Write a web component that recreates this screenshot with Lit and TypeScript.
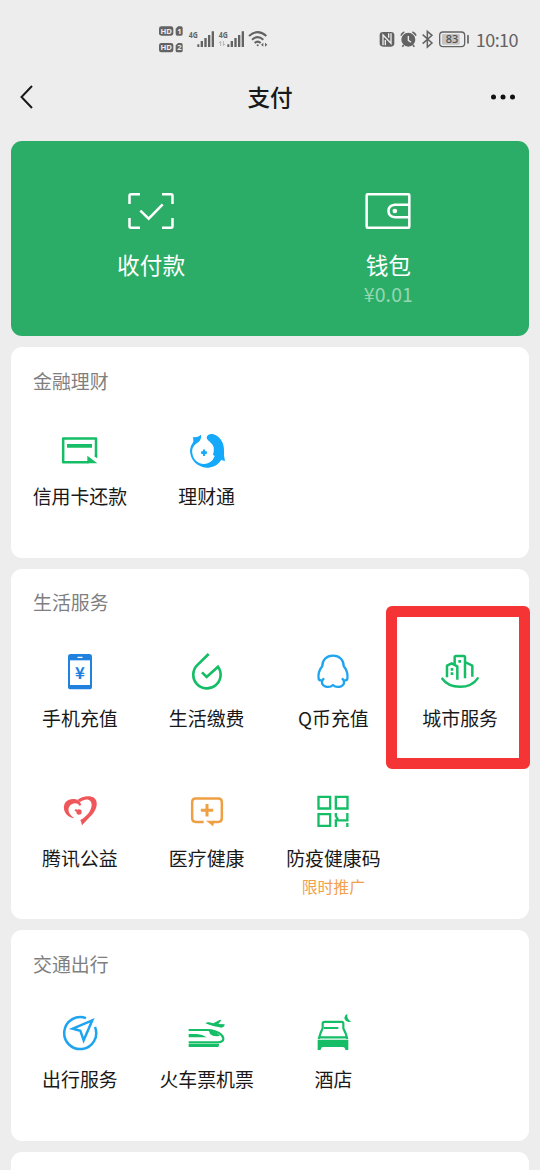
import { LitElement, html, css, svg, nothing } from "lit";
import { customElement, property } from "lit/decorators.js";

const G = "#14bd66";
const B = "#1fa5f0";

type Icon = { box: string; art: unknown };

const icons: Record<string, Icon> = {
  credit: {
    box: "144 265 132 132",
    art: svg`<path d="M258 352V296.500H159.500V367.500H236" fill="none" stroke=${G} stroke-width="7.500" stroke-linejoin="round"/>
      <path d="M171 313h75v11h-75zM232 348L262 371H232zM254.500 345h7v11l-7-5z" fill=${G}/>`,
  },
  wealth: {
    box: "525 265 132 132",
    art: svg`<path d="M548 292Q562 295 573 285Q575 299 565 308C551 316 545 326 547 341C549 360 564 373 582 373C598 373 610 362 614 349L609 345Q613 335 611 323C608 308 592 305 590 294C591 282 608 280 620 288C636 298 643 316 642 335Q641 350 645 364Q638 363 634 360C623 378 606 384 590 384C562 383 540 361 540 332Q541 318 550 306Q551 298 548 292Z" fill="#14a9fa"/>
      <path d="M579 330q3-2 6 0v5h5q2 4 0 8h-5v5q-3 2-6 0v-5h-5q-2-4 0-8h5z" fill="#14a9fa"/>`,
  },
  phone: {
    box: "144 240 132 132",
    art: svg`<rect x="174" y="252" width="72" height="106" rx="8" fill="#2181df"/>
      <path d="M180 271h60v74h-60z" fill="#fff"/><path d="M204 262h12" stroke="#fff" stroke-width="4" stroke-linecap="round"/>
      <text x="210" y="327" text-anchor="middle" font-family="Noto Sans CJK SC" font-size="50" font-weight="700" fill="#2181df">¥</text>`,
  },
  bill: {
    box: "525 240 132 132",
    art: svg`<path d="M596 252L561 286A41 41 0 1 0 624 290L590 321L576 307" fill="none" stroke=${G} stroke-width="8"/>`,
  },
  penguin: {
    box: "125 165 132 132",
    art: svg`<path d="M191 182C170 182 159 196 159 213C149 226 146 240 148 251C149 256 153 257 159 256C156 266 160 272 167 274C176 277 186 275 191 270C196 275 206 277 215 274C222 272 226 266 223 256C229 257 233 256 234 251C236 240 233 226 223 213C223 196 212 182 191 182ZM158 257L164 250M224 257L218 250" fill="none" stroke=${B} stroke-width="7" stroke-linejoin="round"/>`,
  },
  city: {
    box: "505 165 132 132",
    art: svg`<g fill="none" stroke=${G} stroke-width="7.500" stroke-linejoin="round"><path d="M532 247V212L546 205L563 214V254M555 207V187Q555 183 559 183H582Q586 183 586 187V250M586 201L608 212V245"/><path d="M518 251Q535 275 571 275.500Q607 275 624 250" stroke-linecap="round"/></g>
      <path d="M566 195h8v8h-8zM543 219h8v8h-8zM543 232h8v8h-8z" fill=${G}/>`,
  },
  heart: {
    box: "144 32 132 132",
    art: svg`<g fill="#f0575a"><path d="M202 62C214 51 237 47 250 54C266 64 262 87 248 104L216 138Q214 128 211 122C230 113 244 94 245 78C246 60 229 54 210 68Z"/><path d="M214 77C208 55 180 54 167 68C153 88 168 114 193 117C177 105 171 91 179 80C187 70 202 68 208 79Z"/><circle cx="207" cy="98" r="8"/><circle cx="198" cy="93" r="3.500"/></g>`,
  },
  medical: {
    box: "525 32 132 132",
    art: svg`<path d="M581 128H557Q546.500 128 546.500 117V68Q546.500 57.500 557 57.500H625Q635.500 57.500 635.500 68V117Q635.500 128 625 128H611" fill="none" stroke="#efa045" stroke-width="7.500"/>
      <path d="M588 124H614V126L609 141ZM586.500 74h9v14.500h14v9h-14v14h-9v-14h-14v-9h14z" fill="#efa045"/>`,
  },
  qr: {
    box: "155 30 132 132",
    art: svg`<path d="M177.500 50.500h35v35h-35zM229.500 50.500h35v35h-35zM177.500 102.500h35v35h-35zM229.500 99v9l6 10M229.500 141v-20h34.500V99M264 129v12" fill="none" stroke=${G} stroke-width="7"/>`,
  },
  compass: {
    box: "145 243 132 132",
    art: svg`<path d="M229 264.500A48 48 0 1 0 256 291M248 271L222 331L212 302L189 296Z" fill="none" stroke=${B} stroke-width="7.500"/>`,
  },
  train: {
    box: "525 243 132 132",
    art: svg`<path d="M536 300H594C622 301 640 315 640 326Q640 336 624 337H536" fill="none" stroke=${G} stroke-width="6.500"/>
      <path d="M536 342H628L625 351H536ZM536 312H560Q578 313 590 322H536ZM596 300Q618 304 630 317Q612 322 600 312ZM586 280L594 276L610 280L630 269L634 271L625 282L644 283Q644 291 635 293Q615 291 586 280Z" fill=${G}/>`,
  },
  hotel: {
    box: "125 33 132 132",
    art: svg`<path d="M148 117Q154 96 160 85V70Q160 65.500 166 65.500H217Q222 65.500 222 70V85Q229 97 234 117M164 84H207M152 112H230" fill="none" stroke=${G} stroke-width="6.500"/>
      <path d="M145 119H237V150H228Q227 141 221 141H161Q155 141 154 150H145ZM234 41Q223 46 226 58Q232 70 247 64Q232 61 234 41Z" fill=${G}/>`,
  },
};

type Service = { icon: string; name: string; note?: string; marked?: boolean };

const sections: { title: string; items: Service[] }[] = [
  {
    title: "金融理财",
    items: [
      { icon: "credit", name: "信用卡还款" },
      { icon: "wealth", name: "理财通" },
    ],
  },
  {
    title: "生活服务",
    items: [
      { icon: "phone", name: "手机充值" },
      { icon: "bill", name: "生活缴费" },
      { icon: "penguin", name: "Q币充值" },
      { icon: "city", name: "城市服务", marked: true },
      { icon: "heart", name: "腾讯公益" },
      { icon: "medical", name: "医疗健康" },
      { icon: "qr", name: "防疫健康码", note: "限时推广" },
    ],
  },
  {
    title: "交通出行",
    items: [
      { icon: "compass", name: "出行服务" },
      { icon: "train", name: "火车票机票" },
      { icon: "hotel", name: "酒店" },
    ],
  },
];

@customElement("status-bar")
class StatusBar extends LitElement {
  static styles = css`
    :host { display: flex; justify-content: space-between; height: 60px; padding: 15px 22px 0 159.3px; box-sizing: border-box; color: #636363; }
    .group { display: flex; height: 45px; }
    .right { height: 40px; padding-top: 5px; }
    svg { display: block; font-family: "Noto Sans", sans-serif; font-weight: 700; }
    .clock { font: 18px/39px "Noto Sans CJK SC", sans-serif; letter-spacing: -0.55px; }
  `;
  signal(x: number, data: boolean) {
    return html`<svg width="30" height="45" viewBox="${x} 0 90 135" fill="#636363">
      <text x=${x + 2} y="70" font-size="28" textLength="27" lengthAdjust="spacingAndGlyphs">4G</text>
      <path transform="translate(${x} 0)" d="M28 88h6v8h-6zM38 78h7v18h-7zM49 69h7v27h-7zM60 60h7v36h-7zM71 49h7v47h-7z" />
      ${data ? svg`<path d="M213 93V79l-5 5M221 78v14l5-5" fill="none" stroke="#b5b5b5" stroke-width="3"/>` : nothing}
    </svg>`;
  }
  badge(y: number, n: string) {
    return svg`<rect x="28" y=${y} width="43" height="28" rx="7"/><path transform="translate(78 ${y})" d="M7 0H16Q21 0 21 5V23Q21 28 16 28H5Q0 28 0 23V7Z"/>
      <g fill="#ededed" font-size="23" text-anchor="middle"><text x="49.500" y=${y + 22}>HD</text><text x="89" y=${y + 22}>${n}</text></g>`;
  }
  render() {
    return html`
      <div class="group">
        <svg width="29" height="45" viewBox="28 0 87 135" fill="#636363">${this.badge(34, "1")}${this.badge(84, "2")}</svg>
        ${this.signal(115, false)}${this.signal(205, true)}
        <svg width="20" height="45" viewBox="295 0 60 135" fill="none" stroke="#636363" stroke-width="6">
          <path d="M298 63Q324 40 350 63M307 74Q324 59 341 74M315 84Q324 76 333 84" />
          <circle cx="324" cy="91" r="3" fill="#636363" stroke="none"/>
          <path d="M341 83v12l-7-6zM346 83v12l7-6z" fill="#636363" stroke="none"/>
        </svg>
      </div>
      <div class="group right">
        <svg width="98" height="40" viewBox="26 0 294 120" fill="none" stroke="#636363">
          <rect x="31" y="36" width="44" height="44" rx="10" fill="#636363" stroke="none"/>
          <path d="M41 76V45L65 70V40M48 76V60M58 40V53" stroke="#ededed" stroke-width="4"/>
          <circle cx="117" cy="59" r="19" fill="#636363" stroke-width="4"/>
          <path d="M117 48V61L125 67" stroke="#ededed" stroke-width="4"/>
          <path d="M95 47Q97 39 105 36M129 36Q137 39 140 47M103 75L99 80M131 75L135 80" stroke-width="5"/>
          <path d="M160 44L188 69L174 81V34L188 46L160 71" stroke-width="4.500"/>
          <rect x="211" y="36" width="75" height="44" rx="10" stroke-width="4"/>
          <rect x="218" y="42" width="53" height="32" rx="4" fill="#c4c4c4" stroke="none"/>
          <path d="M296 47V69" stroke-width="5" stroke-linecap="round"/>
          <text x="248" y="70" text-anchor="middle" font-size="33" font-weight="500" fill="#505050" stroke="none">83</text>
        </svg>
        <span class="clock">10:10</span>
      </div>`;
  }
}

@customElement("service-card")
class ServiceCard extends LitElement {
  @property({ attribute: false }) heading = "";
  @property({ attribute: false }) items: Service[] = [];
  static styles = css`
    :host { display: block; background: #fff; border-radius: 11px; }
    .title { height: 28px; padding: 19.5px 22px 22.5px; font-size: 18.9px; line-height: 28px; color: #7f7f7f; }
    .grid { display: grid; grid-template-columns: repeat(4, 1fr); grid-auto-rows: 140px; padding: 0 5.5px 0.5px; }
    .item { position: relative; display: flex; flex-direction: column; align-items: center; padding-top: 11px; }
    svg { display: block; width: 44px; height: 44px; }
    .name { margin-top: 10px; font-size: 18.9px; line-height: 27px; color: #191919; white-space: nowrap; }
    .note { margin-top: 5px; font-size: 15.8px; line-height: 22px; color: #f1a04a; }
    .mark { position: absolute; left: -11px; right: -6.2px; top: -32.4px; height: 162.6px; box-sizing: border-box; border: 11px solid #f53535; border-radius: 6px; }
  `;
  render() {
    return html`<div class="title">${this.heading}</div>
      <div class="grid">
        ${this.items.map(
          (s) => html`<div class="item">
            <svg viewBox=${icons[s.icon].box}>${icons[s.icon].art}</svg>
            <div class="name">${s.name}</div>
            ${s.note ? html`<div class="note">${s.note}</div>` : nothing}
            ${s.marked ? html`<div class="mark"></div>` : nothing}
          </div>`
        )}
      </div>`;
  }
}

@customElement("app-root")
class AppRoot extends LitElement {
  static styles = css`
    :host { display: block; height: 1170px; overflow: hidden; background: #ededed; font-family: "Noto Sans CJK SC", sans-serif; }
    .nav { display: flex; align-items: center; justify-content: space-between; height: 75px; padding: 0 22px 0.6px 17px; box-sizing: border-box; margin-bottom: 5.5px; }
    .nav svg { display: block; }
    .nav h1 { margin: 0; font-size: 22.6px; line-height: 34px; font-weight: 500; color: #191919; }
    .back { width: 32px; }
    .more { width: 27px; }
    .cards { display: flex; flex-direction: column; gap: 11px; padding: 0 11px; }
    .pay { display: grid; grid-template-columns: 1fr 1fr; height: 195.8px; padding: 50px 22px 0 21.5px; box-sizing: border-box; border-radius: 11px; background: #2bad67; color: #fff; }
    .cell { display: flex; flex-direction: column; align-items: center; }
    .cell svg { display: block; width: 50px; height: 40px; }
    .label { margin-top: 17px; font-size: 22.7px; line-height: 34px; }
    .amount { margin-top: -1px; font-size: 19.5px; line-height: 26px; color: #95d6b3; letter-spacing: 0.1px; }
    .next { height: 60px; border-radius: 11px; background: #fff; }
  `;
  render() {
    return html`
      <status-bar></status-bar>
      <div class="nav">
        <svg class="back" height="28" viewBox="0 0 32 28"><path d="M15 3L4.500 14L15 25" fill="none" stroke="#191919" stroke-width="2"/></svg>
        <h1>支付</h1>
        <svg class="more" height="28" viewBox="0 0 27 28" fill="#111"><circle cx="2.500" cy="14" r="2.500"/><circle cx="12" cy="14" r="2.500"/><circle cx="21.500" cy="14" r="2.500"/></svg>
      </div>
      <div class="cards">
        <div class="pay">
          <div class="cell">
            <svg viewBox="78 63 150 120" fill="none" stroke="#fff" stroke-width="7.500"><path d="M88.500 102V77Q88.500 72.500 93 72.500H120M186 72.500H213Q217.500 72.500 217.500 77V102M217.500 144V169Q217.500 173.500 213 173.500H186M120 173.500H93Q88.500 173.500 88.500 169V144M121 122L146 146L188 103"/></svg>
            <div class="label">收付款</div>
          </div>
          <div class="cell">
            <svg viewBox="790.500 63 150 120" fill="none" stroke="#fff" stroke-width="7.500"><rect x="801.500" y="72.500" width="128" height="101" rx="3"/><path d="M930 104.500H886Q867 106 867 123Q867 140 886 141.500H930"/><circle cx="886" cy="123" r="7" fill="#fff" stroke="none"/></svg>
            <div class="label">钱包</div>
            <div class="amount">¥0.01</div>
          </div>
        </div>
        ${sections.map((s) => html`<service-card .heading=${s.title} .items=${s.items}></service-card>`)}
        <div class="next"></div>
      </div>`;
  }
}
